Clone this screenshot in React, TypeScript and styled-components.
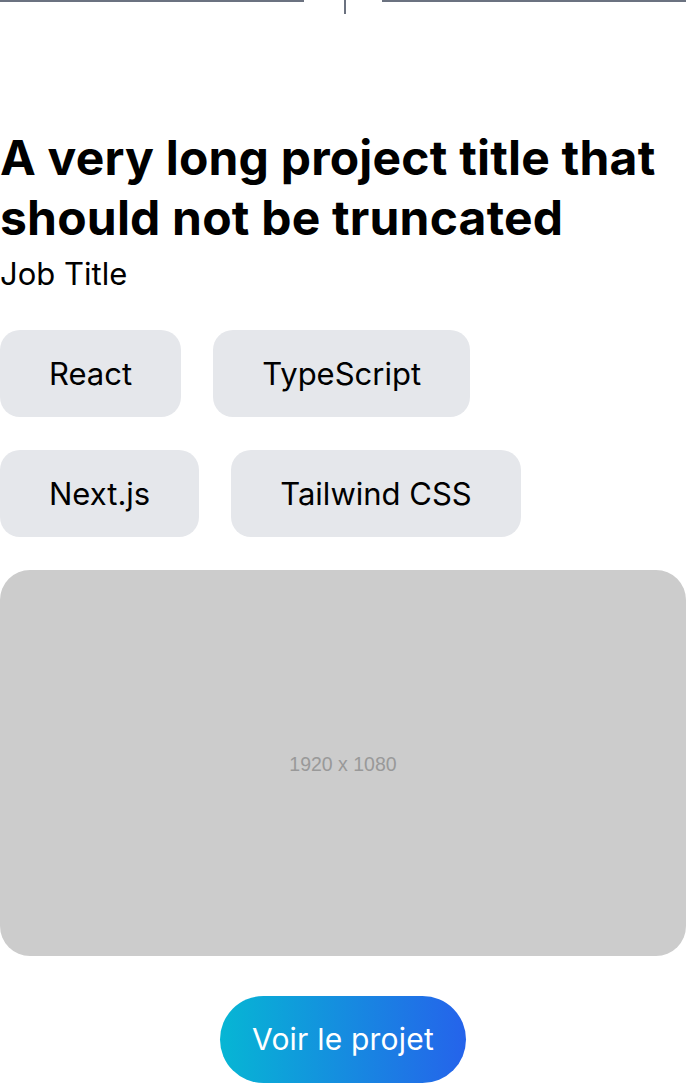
import styled, { createGlobalStyle } from "styled-components";

const GlobalStyle = createGlobalStyle`
  * { box-sizing: border-box; }
  body {
    margin: 0;
    background: #ffffff;
    font-family: "Inter", "Liberation Sans", sans-serif;
    color: #000000;
  }
`;

const Card = styled.article`
  display: flex;
  flex-direction: column;
  width: 686px;
`;

const Connector = styled.div`
  display: flex;
  align-items: flex-start;
  height: 14px;
`;

const Rule = styled.span`
  flex: 1;
  height: 2px;
  background: #6b7280;
`;

const Joint = styled.span`
  width: 78px;
  height: 14px;
  display: flex;
  justify-content: center;

  &::after {
    content: "";
    width: 2px;
    height: 14px;
    margin-left: 3px;
    background: #6b7280;
  }
`;

const Title = styled.h2`
  margin: 114px 0 0;
  font-size: 48px;
  line-height: 60px;
  font-weight: 700;
  letter-spacing: 0.2px;
`;

const Subtitle = styled.p`
  margin: 8px 0 0;
  font-size: 31px;
  line-height: 36px;
  font-weight: 400;
`;

const Tags = styled.ul`
  list-style: none;
  margin: 38px 0 0;
  padding: 0;
  display: flex;
  flex-wrap: wrap;
  column-gap: 32px;
  row-gap: 33px;
`;

const Tag = styled.li`
  height: 87px;
  padding: 0 49px;
  display: flex;
  align-items: center;
  border-radius: 20px;
  background: #e5e7eb;
  font-size: 31px;
`;

const Preview = styled.div`
  margin-top: 33px;
  width: 100%;
  aspect-ratio: 16 / 9;
  border-radius: 30px;
  background: #cccccc;
  display: flex;
  align-items: center;
  justify-content: center;
  padding-top: 4px;
  font-family: "Liberation Sans", Arial, sans-serif;
  font-size: 19.5px;
  color: #999999;
`;

const Action = styled.a`
  align-self: center;
  margin-top: 40px;
  height: 87px;
  padding: 0 32px;
  display: flex;
  align-items: center;
  border-radius: 9999px;
  background: linear-gradient(to right, #06b6d4, #2563eb);
  color: #ffffff;
  font-size: 30px;
  letter-spacing: 0.2px;
  font-weight: 400;
  text-decoration: none;
`;

const tags = ["React", "TypeScript", "Next.js", "Tailwind CSS"];

export default function App() {
  return (
    <>
      <GlobalStyle />
      <Card>
        <Connector>
          <Rule />
          <Joint />
          <Rule />
        </Connector>
        <Title>A very long project title that should not be truncated</Title>
        <Subtitle>Job Title</Subtitle>
        <Tags>
          {tags.map((t) => (
            <Tag key={t}>{t}</Tag>
          ))}
        </Tags>
        <Preview>1920 x 1080</Preview>
        <Action href="#">Voir le projet</Action>
      </Card>
    </>
  );
}
